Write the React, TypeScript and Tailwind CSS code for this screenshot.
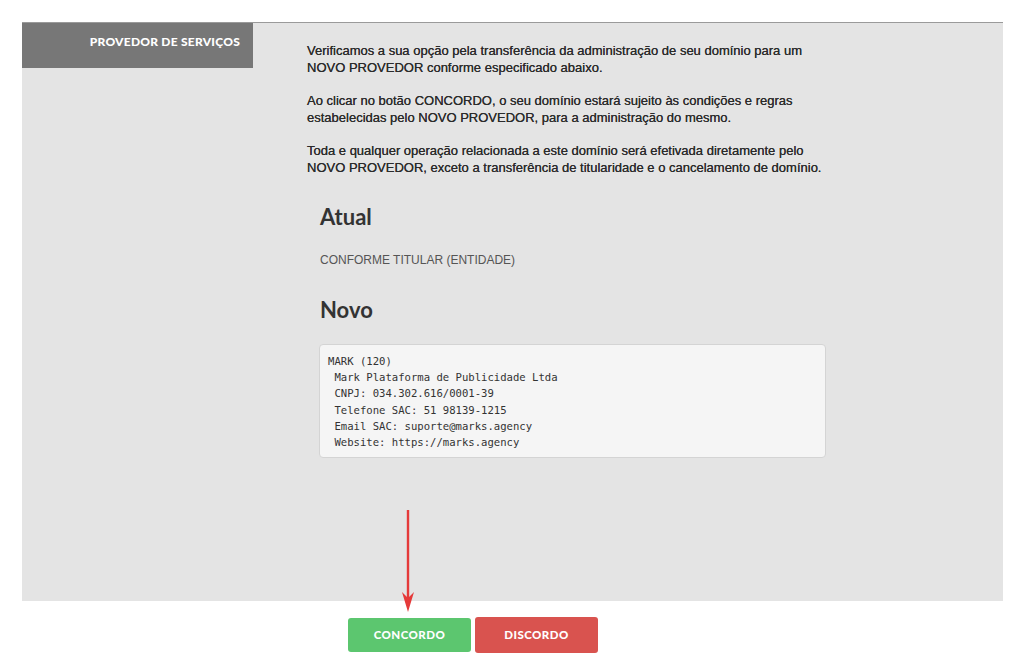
export default function App() {
  return (
    <div className="relative min-h-[668px] bg-white pt-[22px] font-['Liberation_Sans',Arial,sans-serif]">
      <div className="ml-[22px] mr-[21px] flex h-[579px] border-t border-[#9a9a9a] bg-[#e4e4e4]">
        <aside className="w-[231px] shrink-0">
          <div className="flex h-[45px] justify-end bg-[#777777] pr-[13px] pt-[13px]">
            <span className="font-['Lato',sans-serif] text-[12px] font-black leading-none tracking-[0.02em] text-white">
              PROVEDOR DE SERVIÇOS
            </span>
          </div>
        </aside>

        <main className="ml-[54px] w-[525px] pt-[19px] text-[13px] leading-[17px] text-[#2b2b2b]">
          <p className="[text-shadow:0_0_0.4px_#333]">
            Verificamos a sua opção pela transferência da administração de seu domínio para um NOVO
            PROVEDOR conforme especificado abaixo.
          </p>
          <p className="mt-[16px] [text-shadow:0_0_0.4px_#333]">
            Ao clicar no botão CONCORDO, o seu domínio estará sujeito às condições e regras
            estabelecidas pelo NOVO PROVEDOR, para a administração do mesmo.
          </p>
          <p className="mt-[16px] [text-shadow:0_0_0.4px_#333]">
            Toda e qualquer operação relacionada a este domínio será efetivada diretamente pelo NOVO
            PROVEDOR, exceto a transferência de titularidade e o cancelamento de domínio.
          </p>

          <div className="ml-[13px] mt-[26px] w-[506px]">
            <h3 className="font-['Lato',sans-serif] text-[22px] font-bold leading-[30px] text-[#333]">Atual</h3>
            <p className="mt-[20px] text-[12px] leading-[16px] text-[#555]">CONFORME TITULAR (ENTIDADE)</p>

            <h3 className="mt-[27px] font-['Lato',sans-serif] text-[22px] font-bold leading-[30px] text-[#333]">Novo</h3>
            <pre className="-ml-px mt-[19px] h-[114px] rounded-[4px] border border-[#d4d4d4] bg-[#f5f5f5] px-[8px] pt-[8px] font-['DejaVu_Sans_Mono',monospace] text-[10.6px] leading-[16.2px] text-[#333]">
{`MARK (120)
 Mark Plataforma de Publicidade Ltda
 CNPJ: 034.302.616/0001-39
 Telefone SAC: 51 98139-1215
 Email SAC: suporte@marks.agency
 Website: https://marks.agency`}
            </pre>
          </div>
        </main>
      </div>

      <div className="mt-[17px] flex gap-[4px] pl-[348px]">
        <button className="h-[34px] w-[123px] rounded-[3px] bg-[#5cc66f] font-['Lato',sans-serif] text-[11.5px] font-black tracking-[0.04em] text-white">
          CONCORDO
        </button>
        <button className="-mt-px h-[36px] w-[123px] rounded-[3px] bg-[#d9534f] font-['Lato',sans-serif] text-[11.5px] font-black tracking-[0.04em] text-white">
          DISCORDO
        </button>
      </div>

      {/* annotation arrow pointing at the accept button */}
      <svg className="pointer-events-none absolute left-[398px] top-[508px]" width="20" height="106" viewBox="0 0 20 106">
        <line x1="10" y1="2" x2="10" y2="92" stroke="#e53a3a" strokeWidth="2.4" />
        <path d="M4 84 L10 104 L16 84 L10 90 Z" fill="#e53a3a" />
      </svg>
    </div>
  );
}
